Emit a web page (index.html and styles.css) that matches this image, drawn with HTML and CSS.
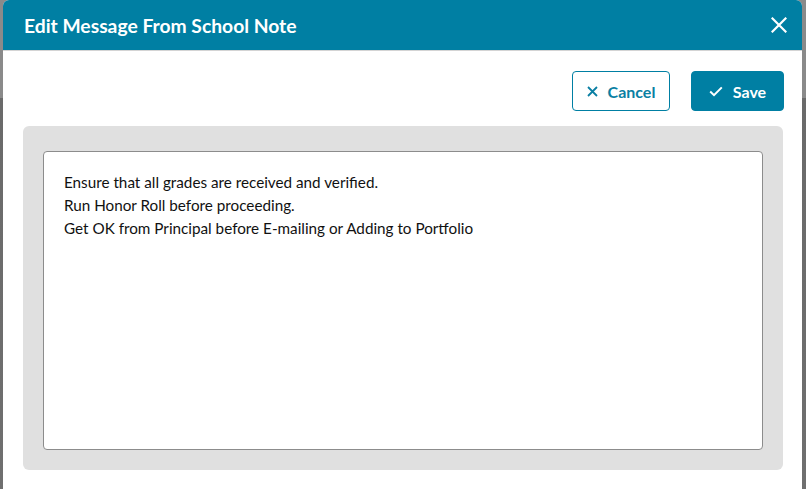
FILE: index.html
```html
<!DOCTYPE html>
<html>
<head>
<meta charset="utf-8">
<link rel="stylesheet" href="styles.css">
</head>
<body>
<div class="modal">
  <div class="modal-header">
    <h1 class="modal-title">Edit Message From School Note</h1>
    <button class="close-btn" aria-label="Close">
      <svg width="16" height="16" viewBox="0 0 16 16"><path d="M1.5 1.5 L14.5 14.5 M14.5 1.5 L1.5 14.5" stroke="#fff" stroke-width="2.2" stroke-linecap="square"/></svg>
    </button>
  </div>
  <div class="toolbar">
    <button class="btn btn-outline">
      <svg width="11" height="11" viewBox="0 0 11 11"><path d="M1 1 L10 10 M10 1 L1 10" stroke="#0a7fa3" stroke-width="1.8"/></svg>
      <span>Cancel</span>
    </button>
    <button class="btn btn-primary">
      <svg width="14" height="11" viewBox="0 0 14 11"><path d="M1.2 5.6 L5 9.2 L12.8 1.4" fill="none" stroke="#fff" stroke-width="2"/></svg>
      <span>Save</span>
    </button>
  </div>
  <div class="panel">
    <div class="note-box">
      <p class="note-line">Ensure that all grades are received and verified.</p>
      <p class="note-line">Run Honor Roll before proceeding.</p>
      <p class="note-line">Get OK from Principal before E-mailing or Adding to Portfolio</p>
    </div>
  </div>
</div>
</body>
</html>
```
FILE: styles.css
```css
html, body {
  margin: 0;
  padding: 0;
  height: 489px;
  overflow: hidden;
}
body {
  background: linear-gradient(to bottom, #8a8a8a 0, #8a8a8a 98px, #6a6a6a 98px, #6f6f6f 100%);
  font-family: "Source Sans Pro", Lato, "Noto Sans", sans-serif;
}
.modal {
  margin-left: 3px;
  width: 799px;
  height: 489px;
  background: #fff;
  border-radius: 6px 6px 0 0;
  display: flex;
  flex-direction: column;
}
.modal-header {
  height: 50px;
  background: #007fa3;
  border-radius: 6px 6px 0 0;
  border-bottom: 1px solid #d4d4d4;
  display: flex;
  align-items: center;
  justify-content: space-between;
  padding: 0 15px 0 21px;
  flex-shrink: 0;
}
.modal-title {
  margin: 0;
  color: #fff;
  font-size: 19.3px;
  font-weight: 700;
}
.close-btn {
  background: none;
  border: 0;
  padding: 0;
  width: 16px;
  height: 16px;
  display: flex;
  cursor: pointer;
}
.toolbar {
  display: flex;
  justify-content: flex-end;
  gap: 21px;
  padding: 20px 18px 0 0;
  margin-bottom: 15px;
}
.btn {
  height: 40px;
  border-radius: 4px;
  font-family: inherit;
  font-size: 16px;
  font-weight: 700;
  display: flex;
  align-items: center;
  justify-content: center;
  gap: 10px;
  box-sizing: border-box;
  cursor: pointer;
}
.btn-outline {
  width: 98px;
  background: #fff;
  border: 1px solid #007fa3;
  color: #0a7fa3;
}
.btn-primary {
  width: 93px;
  background: #007fa3;
  border: 1px solid #007fa3;
  color: #fff;
}
.panel {
  margin: 0 19px 0 20px;
  height: 344px;
  background: #e0e0e0;
  border-radius: 6px;
  padding: 25px 20px 20px;
  box-sizing: border-box;
}
.note-box {
  height: 299px;
  background: #fff;
  border: 1px solid #8c8c8c;
  border-radius: 4px;
  box-sizing: border-box;
  padding: 19px 20px;
  color: #111;
  font-size: 15.25px;
}
.note-line {
  margin: 0;
  line-height: 23px;
}
```
